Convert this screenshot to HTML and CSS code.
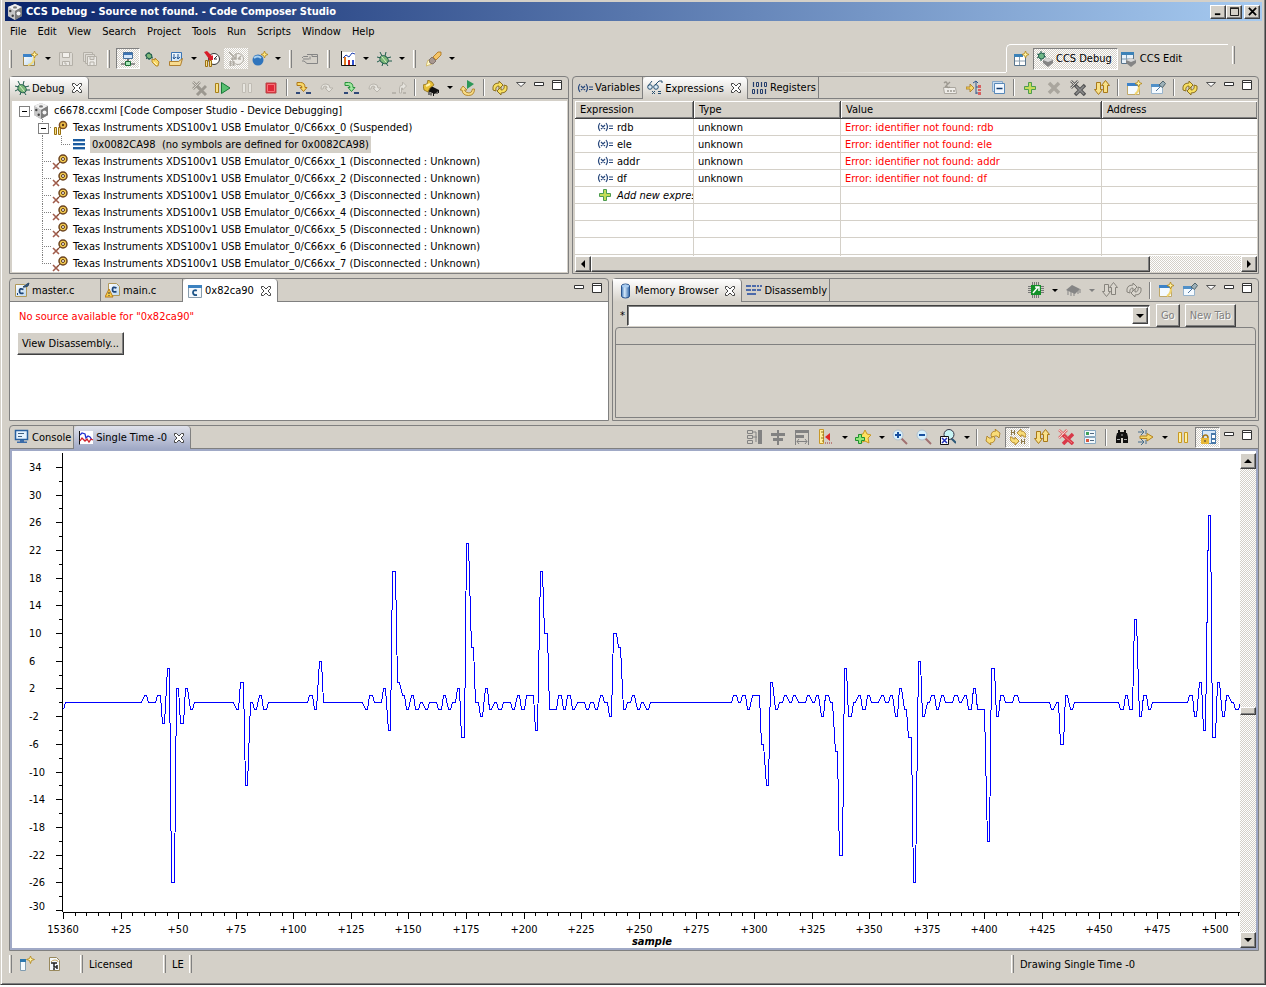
FILE: index.html
```html
<!DOCTYPE html>
<html lang="en">
<head>
    <meta charset="UTF-8">
    <meta name="viewport" content="width=device-width, initial-scale=1.0">
    <title>CCS Debug - Source not found. - Code Composer Studio</title>
    <link rel="stylesheet" href="styles.css">
</head>
<body>

<!-- icon set -->
<svg class="sprite" aria-hidden="true">
    <defs>
        <linearGradient id="gGold" x1="0" y1="0" x2="0" y2="1"><stop offset="0" stop-color="#fff0a8"/><stop offset="1" stop-color="#e0a830"/></linearGradient>
        <linearGradient id="gBlue" x1="0" y1="0" x2="1" y2="0"><stop offset="0" stop-color="#3f78b8"/><stop offset=".4" stop-color="#d4e8fa"/><stop offset="1" stop-color="#2f66a8"/></linearGradient>
        <linearGradient id="gPage" x1="0" y1="0" x2="1" y2="1"><stop offset="0" stop-color="#fff"/><stop offset="1" stop-color="#b8d6f0"/></linearGradient>
    </defs>
    <symbol id="cube" viewBox="0 0 16 16"><path d="M8 0l7 3v9l-7 4-7-4V3z" fill="#a0a0a0"/><path d="M8 0l7 3-7 4-7-4z" fill="#f0f0f0"/><path d="M1 3l7 4v9l-7-4z" fill="#c8c8c8"/><path d="M8 7l7-4v9l-7 4z" fill="#7c7c7c"/><ellipse cx="8" cy="3.400" rx="2" ry="1.200" fill="#777"/><circle cx="3.300" cy="7" r="1.200" fill="#444"/><circle cx="5.700" cy="11.700" r="1.200" fill="#444"/><circle cx="11.500" cy="9.500" r="2" fill="#f4f4f4"/></symbol>
    <symbol id="new" viewBox="0 0 16 16"><path d="M1.500 4.500h11v10h-11z" fill="url(#gPage)" stroke="#a08850"/><path d="M1 3h9v3H1z" fill="#3c82c8"/><path d="M6 14q6-1 6-8" fill="none" stroke="#f2dc80" stroke-width="2"/><path d="M12.500 0l1 2.500 2.500 1-2.500 1-1 2.500-1-2.500-2.500-1 2.500-1z" fill="#fff2a0" stroke="#b08418" stroke-width=".8"/></symbol>
    <symbol id="save" viewBox="0 0 16 16"><path d="M1.500 1.500h12l1 1v12h-13z" fill="#dedbd5" stroke="#b4b0a8"/><path d="M4.500 1.500h7v5h-7z" fill="#f2f0ec" stroke="#b4b0a8"/><path d="M4.500 10.500h7v4h-7zM6 12h2v2" fill="#eceae6" stroke="#b4b0a8"/></symbol>
    <symbol id="saveall" viewBox="0 0 16 16"><path d="M1.500 1.500h9v9h-9z" fill="#dedbd5" stroke="#b4b0a8"/><path d="M3.500 3.500h9v9h-9z" fill="#dedbd5" stroke="#b4b0a8"/><path d="M5.500 5.500h9v9h-9zM8 5.500v3h4v-3M8 14v-3h4v3" fill="#eceae6" stroke="#b4b0a8"/></symbol>
    <symbol id="target" viewBox="0 0 16 16"><path d="M3.500 1.500h9v6h-9z" fill="#d6e8fa" stroke="#46709c"/><path d="M4 2h8v2H4z" fill="#3c74b4"/><path d="M8 8v3" stroke="#777" stroke-width="2"/><path d="M1 13h14" stroke="#777" stroke-width="1.500"/><path d="M5.500 10.500h5v4h-5z" fill="#a8e8b8" stroke="#1c6c34"/></symbol>
    <symbol id="bug" viewBox="0 0 16 16"><path d="M4 1l2 4M10 1l-1 4M15 6l-4 1M16 10h-4M12 15l-2-3M6 15l1-3M1 11l4-2M1 6l4 1" stroke="#1f5c4c"/><ellipse cx="8.500" cy="8.500" rx="4.500" ry="3.600" transform="rotate(40 8 8)" fill="#7cb878" stroke="#1f5c4c"/><path d="M5.500 5.500l5 6" stroke="#dff2cc"/></symbol>
    <symbol id="bugplug" viewBox="0 0 16 16"><path d="M1 4l8 3M2 8l6-5M5 1v8" stroke="#1f5c4c"/><ellipse cx="5" cy="5" rx="3" ry="2.500" transform="rotate(40 5 5)" fill="#7cb878" stroke="#1f5c4c"/><path d="M8 8l3 1V7l4 4-1 4h-2l-4-4z" fill="#f8d868" stroke="#a87818" stroke-width=".8"/><path d="M10 11l3 3" stroke="#fff4c0"/></symbol>
    <symbol id="load" viewBox="0 0 16 16"><path d="M3.500 1.500h10v9h-10z" fill="url(#gPage)" stroke="#3c74b4"/><path d="M6 3v5M10 3v5M5 6l1 2 2-2M9 6l1 2 2-2" fill="none" stroke="#2c5c98"/><path d="M1.500 14.500v-4h9l4-3-2 7z" fill="#f8dc90" stroke="#b08030"/></symbol>
    <symbol id="clock" viewBox="0 0 16 16"><circle cx="10" cy="8" r="5.500" fill="#fff" stroke="#333"/><path d="M10 8l3-3M10 8h3" stroke="#333"/><path d="M0 1l3-1 5 5 1-1v5H4l1-1z" fill="#d81c28"/><path d="M1.500 9.500h2v6h-2zM5.500 9.500h2v6h-2z" fill="#f8e090" stroke="#9c7010"/></symbol>
    <symbol id="clockoff" viewBox="0 0 16 16"><circle cx="10" cy="8" r="5.500" fill="#f2f0ec" stroke="#b0aca4"/><path d="M10 8l3-3M10 8h3M1 1l7 7M8 3v5H3" stroke="#b0aca4" fill="none" stroke-width="1.500"/><path d="M2.500 10v5M5.500 10v5" stroke="#b0aca4" stroke-width="2"/></symbol>
    <symbol id="globe" viewBox="0 0 16 16"><circle cx="6" cy="9" r="5.500" fill="#2f74bc"/><path d="M2 7q4-3 7 0" stroke="#a8d0f0" stroke-width="2" fill="none"/><path d="M12.500 0l1 2.500 2.500 1-2.500 1-1 2.500-1-2.500-2.500-1 2.500-1z" fill="#ffe880" stroke="#b08418" stroke-width=".8"/></symbol>
    <symbol id="card" viewBox="0 0 16 16"><path d="M5 3.500h10.500v9H5l-3-2.500H0M6 5.500H1.500L0 7M7 8H1M8 5.500v3M10 3.500v2h5" fill="none" stroke="#858585"/></symbol>
    <symbol id="bars" viewBox="0 0 16 16"><path d="M2 1h13v13H2z" fill="#fff"/><path d="M1.500 0v14.500H16" fill="none" stroke="#111"/><path d="M3 7l3-3 3 2 3-4 3 1" fill="none" stroke="#2040b0"/><path d="M4 6h2v8H4z" fill="#e07820"/><path d="M8 9h2v5H8z" fill="#d02020"/><path d="M12 9h2v5h-2z" fill="#3050d0"/></symbol>
    <symbol id="torch" viewBox="0 0 16 16"><path d="M0 15l2-6 3 1 1 3z" fill="#fff8c8" stroke="#c8a840" stroke-width=".6"/><path d="M3 9l3-3 4 4-3 3q-4 0-4-4z" fill="#a89890" stroke="#6c5c54" stroke-width=".7"/><path d="M7 6l5-5h3v3l-5 5z" fill="#f4c468" stroke="#a87018" stroke-width=".8"/></symbol>
    <symbol id="xx" viewBox="0 0 16 16"><path d="M2 2l7 7M9 2L2 9" stroke="#9c9890" stroke-width="2.500"/><path d="M2 2l7 7M9 2L2 9" stroke="#d8d4cc"/><path d="M6 6l9 9M15 6l-9 9" stroke="#9c9890" stroke-width="3"/></symbol>
    <symbol id="xxdark" viewBox="0 0 16 16"><path d="M1 1l7 7M8 1L1 8" stroke="#666" stroke-width="2.500"/><path d="M1 1l7 7M8 1L1 8" stroke="#d8d4cc"/><path d="M5 5l10 10M15 5L5 15" stroke="#555" stroke-width="3.500"/><path d="M6 6l8 8M14 6l-8 8" stroke="#8c8c8c" stroke-width="1.500"/></symbol>
    <symbol id="xxred" viewBox="0 0 16 16"><path d="M1 1l8 7M9 1L1 9" stroke="#e07070" stroke-width="2.500"/><path d="M1 1l8 7M9 1L1 9" stroke="#f8d0d0"/><path d="M5 6l10 9M15 5L5 15" stroke="#d83848" stroke-width="3.500"/><path d="M6 7l8 7" stroke="#f07878"/></symbol>
    <symbol id="xone" viewBox="0 0 16 16"><path d="M3 3l10 10M13 3L3 13" stroke="#aaa69e" stroke-width="3.500"/></symbol>
    <symbol id="resume" viewBox="0 0 16 16"><path d="M.5 3.500h3v9h-3z" fill="#f8e088" stroke="#a88018"/><path d="M6.500 2.500l8.500 5.500-8.500 5.500z" fill="#58c070" stroke="#187838"/></symbol>
    <symbol id="pauseoff" viewBox="0 0 16 16"><path d="M3.500 3.500h3v9h-3zM9.500 3.500h3v9h-3z" fill="#e8e6e0" stroke="#c0bcb4"/></symbol>
    <symbol id="pause" viewBox="0 0 16 16"><path d="M3.500 3.500h3v10h-3zM9.500 3.500h3v10h-3z" fill="#fff0a0" stroke="#c89820"/></symbol>
    <symbol id="stop" viewBox="0 0 16 16"><path d="M3 3h10v10H3z" fill="#e02838" stroke="#b84848"/><path d="M4.500 4.500h7v7h-7z" fill="none" stroke="#f87078"/></symbol>
    <symbol id="into" viewBox="0 0 16 16"><path d="M2 2.500h3.500q4.500 0 4.500 5h2l-3.500 4-3.500-4h2q0-2-2-2H2z" fill="#f8d868" stroke="#b07818"/><path d="M1 13h4M11 13h5" stroke="#304878" stroke-width="2"/></symbol>
    <symbol id="intogreen" viewBox="0 0 16 16"><path d="M2 2.500h3.500q4.500 0 4.500 5h2l-3.500 4-3.500-4h2q0-2-2-2H2z" fill="#a0e8a0" stroke="#28903c"/><path d="M1 13h4M11 13h5" stroke="#304878" stroke-width="2"/></symbol>
    <symbol id="over" viewBox="0 0 16 16"><path d="M2 9q0-5 5-5 4 0 4 4h3l-4 4-4-4h2q0-2-2-2-2 0-2 3z" fill="#e6e4de" stroke="#b8b4ac"/></symbol>
    <symbol id="ret" viewBox="0 0 16 16"><path d="M8.500 13V8q0-3 3-3V2l4 4-4 4V8h-1v5z" fill="#e6e4de" stroke="#b8b4ac"/><path d="M1 13h4M12 13h3" stroke="#b8b4ac" stroke-width="2"/></symbol>
    <symbol id="chipgold" viewBox="0 0 16 16"><path d="M4 11l4-5 8 4-4 4z" fill="#111"/><path d="M6 12v3M8 13v2.500M10.500 13v3M14 11v3M15.500 10v3" stroke="#111"/><path d="M0 5l4-1 1-4 4 2 2 3-4 3-2 4-4-2z" fill="#e8c038" stroke="#8c6c18" stroke-width=".8"/><path d="M3 6l4-2" stroke="#fff4b0" stroke-width="2"/></symbol>
    <symbol id="restart" viewBox="0 0 16 16"><path d="M7 0l7 4-7 5z" fill="#2c9858"/><path d="M3 6l4 4H4.500q1 3 4.500 3 3 0 3.500-4h2q0 6.500-6 6.500Q2.500 15.500 2 10H0z" fill="#f8dc88" stroke="#a87818" stroke-width=".8"/></symbol>
    <symbol id="cycle" viewBox="0 0 16 16"><path d="M1 10q-1-7 6-7V1l4 4-4 4V6Q3 6 4 11z" fill="#f8e060" stroke="#8c7020"/><path d="M15 6q1 7-6 7v2l-4-4 4-4v3q4 0 3-5z" fill="#f8e060" stroke="#8c7020"/></symbol>
    <symbol id="cycleoff" viewBox="0 0 16 16"><path d="M1 10q-1-7 6-7V1l4 4-4 4V6Q3 6 4 11z" fill="#dad6ce" stroke="#86837c"/><path d="M15 6q1 7-6 7v2l-4-4 4-4v3q4 0 3-5z" fill="#dad6ce" stroke="#86837c"/></symbol>
    <symbol id="updown" viewBox="0 0 16 16"><path d="M2.500 2.500h4v7h2l-4 5-4-5h2z" fill="#f8e088" stroke="#a87818"/><path d="M9.500 12.500v-7h-2l4-5 4 5h-2v7z" fill="#f8e088" stroke="#a87818"/></symbol>
    <symbol id="updownoff" viewBox="0 0 16 16"><path d="M2.500 2.500h4v7h2l-4 5-4-5h2z" fill="#dad6ce" stroke="#86837c"/><path d="M9.500 12.500v-7h-2l4-5 4 5h-2v7z" fill="#dad6ce" stroke="#86837c"/></symbol>
    <symbol id="menu" viewBox="0 0 10 10"><path d="M.5 2.500h9L5 6.500z" fill="#fff" stroke="#555"/></symbol>
    <symbol id="min" viewBox="0 0 10 10"><path d="M.5 2.500h9v3h-9z" fill="#fff" stroke="#333"/></symbol>
    <symbol id="max" viewBox="0 0 10 10"><path d="M.5.5h9v9h-9zM0 2.500h10" fill="#fff" stroke="#333"/></symbol>
    <symbol id="close" viewBox="0 0 10 10"><path d="M.5.5h2L5 3 7.500.5h2v2L7 5l2.500 2.500v2h-2L5 7 2.500 9.500h-2v-2L3 5 .5 2.500z" fill="#fff" stroke="#444"/></symbol>
    <symbol id="vars" viewBox="0 0 16 16"><path d="M3 4q-3 4 0 8M9 4q3 4 0 8M4 6l4 4M8 6l-4 4M12 7h4M12 9.500h4" fill="none" stroke="#28487c" stroke-width="1.200"/></symbol>
    <symbol id="glasses" viewBox="0 0 16 16"><circle cx="3" cy="7" r="2.300" fill="#dcecf8" stroke="#285070"/><circle cx="9" cy="7" r="2.300" fill="#dcecf8" stroke="#285070"/><path d="M1 6l4-5M8 5l4-4 3 0v2M5 11l3 3M8 11l-3 3M11 11.500h3M11 13.500h3" fill="none" stroke="#285070"/></symbol>
    <symbol id="registers" viewBox="0 0 16 16"><path d="M1.500 2v5M9.500 2v5M5.500 9v5M13.500 9v5" stroke="#233c6c" stroke-width="1.200"/><path d="M4.500 2.500h2v4h-2zM12.500 2.500h2v4h-2zM.5 9.500h2v4h-2zM8.500 9.500h2v4h-2z" fill="none" stroke="#233c6c"/></symbol>
    <symbol id="typeoff" viewBox="0 0 16 16"><path d="M1.500 7.500h12l1 6h-12z" fill="#eeece8" stroke="#aaa69e"/><path d="M2 3q2-2 3 0v4q1 1 3 0M8 2L3 7M5 11h2M8 11h2M11 11h2" fill="none" stroke="#9c9890" stroke-width="1.300"/></symbol>
    <symbol id="logical" viewBox="0 0 16 16"><path d="M0 7h4V4l4 4-4 4V9H0z" fill="#f8d868" stroke="#a87818" stroke-width=".8"/><path d="M10 1v13M10 7h3M10 13h3M7 3l3-2 2 2" fill="none" stroke="#30588c"/><path d="M12 5h3v3h-3zM12 9h3v2h-3zM12 12h3v3h-3z" fill="#d86060"/></symbol>
    <symbol id="collapse" viewBox="0 0 16 16"><path d="M2.500 1.500h10v10h-10z" fill="#c8dcf0" stroke="#88a8c8"/><path d="M4.500 3.500h10v10h-10z" fill="#f2f8ff" stroke="#5888b8"/><path d="M6.500 8.500h6" stroke="#103c70" stroke-width="1.500"/></symbol>
    <symbol id="plus" viewBox="0 0 16 16"><path d="M6.500 2.500h3v4h4v3h-4v4h-3v-4h-4v-3h4z" fill="#c4dc58" stroke="#4c9c50"/></symbol>
    <symbol id="newview" viewBox="0 0 16 16"><path d="M1.500 3.500h12v11h-12z" fill="#f4faff" stroke="#c0a868"/><path d="M1 3h11v3H1z" fill="#3c82c8"/><path d="M9 14q4-2 4-8" fill="none" stroke="#f0d470" stroke-width="2"/><path d="M12.500 0l1 2.500 2.500 1-2.500 1-1 2.500-1-2.500-2.500-1 2.500-1z" fill="#fff2a0" stroke="#b08418" stroke-width=".8"/></symbol>
    <symbol id="pin" viewBox="0 0 16 16"><path d="M1.500 4.500h11v9h-11z" fill="#f4faff" stroke="#98b4cc"/><path d="M1 4h10v3H1z" fill="#5090c8"/><path d="M6 11l4-4" stroke="#50749c"/><path d="M9 5l4-4 2.500 2.500-3 4z" fill="#9cb0b8" stroke="#50646c"/></symbol>
    <symbol id="memory" viewBox="0 0 16 16"><path d="M4.500 3q0-2 4-2t4 2v10q0 2-4 2t-4-2z" fill="url(#gBlue)" stroke="#28528c"/><ellipse cx="8.500" cy="3" rx="3.500" ry="1.500" fill="#a8ccf0"/></symbol>
    <symbol id="disasm" viewBox="0 0 16 16"><path d="M0 4h5M6 4h4M11 4h2M14 4h2M0 8h5M6 8h4M11 8h4M1 12h9" stroke="#1f48a0" stroke-width="1.600"/></symbol>
    <symbol id="chipgreen" viewBox="0 0 16 16"><path d="M4.500 0v16M6.500 0v16M8.500 0v16M10.500 0v16M0 4.500h16M0 6.500h16M0 8.500h16M0 10.500h16" stroke="#777"/><path d="M3 3h10v10H3z" fill="#149028"/><path d="M5 11l5-6M7 5h4v4" fill="none" stroke="#fff" stroke-width="1.500"/></symbol>
    <symbol id="chipoff" viewBox="0 0 16 16"><path d="M1 8l6-5 8 4-5 5z" fill="#858585"/><path d="M3 8v5M6 9v5M9 10v4M13 8v4M15 7v4" stroke="#858585"/></symbol>
    <symbol id="cfile" viewBox="0 0 16 16"><path d="M1.500 2.500h9l2 2v10h-11z" fill="url(#gPage)" stroke="#b09858"/><path d="M9.500 7.500q-4-2-4 1.500t4 2M3 12h1" fill="none" stroke="#1c4478" stroke-width="1.800"/><path d="M9 5l4-3 2-1-1 3-3 1z" fill="#385878" stroke="#284868"/></symbol>
    <symbol id="cwarn" viewBox="0 0 16 16"><path d="M3.500 1.500h8l3 3v9h-11z" fill="url(#gPage)" stroke="#b09858"/><path d="M11.500 6q-4-2-4 1.500t4 2" fill="none" stroke="#1c4478" stroke-width="1.800"/><path d="M4 7l4 8H0z" fill="#f8d048" stroke="#b87818"/><path d="M4 10v2M4 13v1" stroke="#333"/></symbol>
    <symbol id="cview" viewBox="0 0 16 16"><path d="M1.500 2.500h13v12h-13z" fill="#f4f8fc" stroke="#889cac"/><path d="M1 2h14v3H1z" fill="#3c82c0"/><path d="M10 7.500q-4-1-4 2t4 2.500" fill="none" stroke="#1c5488" stroke-width="1.800"/></symbol>
    <symbol id="console" viewBox="0 0 16 16"><path d="M1.500 1.500h12v9h-12z" fill="#e4f2ff" stroke="#2860a0" stroke-width="1.500"/><path d="M4 4.500h6M4 7.500h4" stroke="#406080"/><path d="M6 11h4v1.500h3V14H3v-1.500h3z" fill="#3c6ca8"/></symbol>
    <symbol id="graph" viewBox="0 0 16 16"><path d="M1 1h14v13H1z" fill="#fff"/><path d="M1.500 1v13.500" stroke="#111"/><path d="M2 5l2-2 3 1 1 4 2-2 2 1 2 3" fill="none" stroke="#2030d0" stroke-width="1.300"/><path d="M2 11l2-3 3 3 2-2 2 3 2-3 2 1" fill="none" stroke="#d02028" stroke-width="1.300"/></symbol>
    <symbol id="align1" viewBox="0 0 16 16"><path d="M1.500 1.500h5v3h-5zM1.500 6.500h5v3h-5zM1.500 11.500h5v3h-5zM7 3h3v10M7 8h4" fill="none" stroke="#828282"/><path d="M12 1h4v14h-4z" fill="#828282"/></symbol>
    <symbol id="align2" viewBox="0 0 16 16"><path d="M1 4h14v3H1zM3 9h10v3H3zM7 1h2v15H7z" fill="#828282"/></symbol>
    <symbol id="align3" viewBox="0 0 16 16"><path d="M1 1h14v3H1zM2 6h8v3H2z" fill="#828282"/><path d="M1.500 4v12M14.500 4v12M3 12.500h10M5 10l-2 2.500L5 15M11 10l2 2.500-2 2.500" fill="none" stroke="#828282"/></symbol>
    <symbol id="ruler" viewBox="0 0 16 16"><path d="M1.500.5h4v14h-4z" fill="#fff0a0" stroke="#c89828"/><path d="M3 3h3M4 6h2M3 9h3M4 12h2" stroke="#94701c"/><path d="M12 4v8L7 8z" fill="#e02828"/><path d="M7 14h8" stroke="#a03030" stroke-dasharray="1 1"/></symbol>
    <symbol id="staradd" viewBox="0 0 16 16"><path d="M10 1l2 4 4 1-3 3 1 5-4-2-5 2 1-5-3-3 5-1z" fill="#ffe060" stroke="#c89820"/><path d="M3.500 5.500h3v3h3v3h-3v3h-3v-3h-3v-3h3z" fill="#90e878" stroke="#209030"/></symbol>
    <symbol id="zoomin" viewBox="0 0 16 16"><path d="M9 9l6 6" stroke="#a07070" stroke-width="2"/><circle cx="6" cy="6" r="5" fill="#d8f0fc" stroke="#b0c0cc"/><path d="M3 6h6M6 3v6" stroke="#1850a0" stroke-width="2"/></symbol>
    <symbol id="zoomout" viewBox="0 0 16 16"><path d="M9 9l6 6" stroke="#a07070" stroke-width="2"/><circle cx="6" cy="6" r="5" fill="#d8f0fc" stroke="#b0c0cc"/><path d="M3 6h6" stroke="#1850a0" stroke-width="2"/></symbol>
    <symbol id="zoomreset" viewBox="0 0 16 16"><path d="M11 9l5 5" stroke="#2c5878" stroke-width="2"/><circle cx="9" cy="5.500" r="5" fill="#c8f4f4" stroke="#334"/><path d="M.5 7.500h8v8h-8z" fill="#fff" stroke="#111"/><path d="M2 9l5 5M7 9l-5 5" stroke="#2030b8" stroke-width="1.500"/></symbol>
    <symbol id="refresh" viewBox="0 0 16 16"><path d="M6 7q0-5 5-5l-1-2 5 4-1 5-2-2q-3-1-4 2z" fill="#f8dc78" stroke="#a87818" stroke-width=".8"/><path d="M10 9q0 5-5 5l1 2-5-4 1-5 2 2q3 1 4-2z" fill="#f8dc78" stroke="#a87818" stroke-width=".8"/></symbol>
    <symbol id="halt" viewBox="0 0 16 16"><path d="M1.500 1v5M4.500 1v5M1.500 3.500h3M11.500 10v5M14.500 10v5M11.500 12.500h3" stroke="#8c7848"/><path d="M7 4l4-4v2q5 0 5 6l-2 0q0-2-3-2v2z" fill="#f8dc78" stroke="#a87818" stroke-width=".8"/><path d="M9 12l-4 4v-2q-5 0-5-6l2 0q0 2 3 2V8z" fill="#f8dc78" stroke="#a87818" stroke-width=".8"/></symbol>
    <symbol id="props" viewBox="0 0 16 16"><path d="M2.500 1.500h11v6h-11zM2.500 8.500h11v6h-11z" fill="#f2f8fc" stroke="#88a8c0"/><path d="M4 3h3v3H4z" fill="#40a058"/><path d="M4 10h3v3H4z" fill="#d85840"/><path d="M8 4.500h4M8 11.500h4" stroke="#506880"/></symbol>
    <symbol id="find" viewBox="0 0 16 16"><path d="M4 1h2v2h4V1h2v3h1l1 4v6H9V9H7v5H2V8l1-4h1z" fill="#111"/><path d="M3 10.500h3M10 10.500h3M7 6h2" stroke="#aaa"/></symbol>
    <symbol id="stepfast" viewBox="0 0 16 16"><path d="M0 3h6M3 0l3 3-3 3M0 13h6M3 10l3 3-3 3M8 1v4M8 11v4" fill="none" stroke="#446c8c"/><path d="M2 7h7V4.500L15 8l-6 4V9.500H2z" fill="#f8d868" stroke="#b08020"/></symbol>
    <symbol id="lock" viewBox="0 0 16 16"><path d="M2.500 1.500h13v13h-13z" fill="#d8e8f8" stroke="#5888b8"/><path d="M11 4h5v11h-5z" fill="#4878a8"/><path d="M12 6h3v3h-3zM12 11h3v2h-3z" fill="#fff"/><path d="M3 9q0-3 2.500-3T8 9" fill="none" stroke="#a87818" stroke-width="1.500"/><path d="M1 9h8v6H1z" fill="#e8b838"/><path d="M4.500 11h1v2h-1z" fill="#333"/></symbol>
    <symbol id="persp" viewBox="0 0 16 16"><path d="M1.500 3.500h11v11h-11z" fill="#fff" stroke="#58748c"/><path d="M1 3h9v3H1z" fill="#3c82b8"/><path d="M6.500 6v8M2 10h10" stroke="#8ca0b0"/><path d="M12.500 0l1 2.500 2.500 1-2.500 1-1 2.500-1-2.500-2.500-1 2.500-1z" fill="#fff2a0" stroke="#b08418" stroke-width=".8"/></symbol>
    <symbol id="perspdebug" viewBox="0 0 16 16"><path d="M0 3l9 3M0 7l8-5M4 0v10" stroke="#1f5c4c"/><circle cx="4.500" cy="5" r="3" fill="#70b888" stroke="#1f5c4c"/><path d="M6 9l5-2 5 2v3l-5 4-5-4z" fill="#858585"/><path d="M6 9l5-2 5 2-5 2z" fill="#d8d8d8"/></symbol>
    <symbol id="perspedit" viewBox="0 0 16 16"><path d="M.5 1.500h12v11H.5z" fill="#e8f2fa" stroke="#58748c"/><path d="M0 1h13v3H0z" fill="#3c82b8"/><path d="M5.500 4v8M1 8h11" stroke="#7898b0"/><path d="M5 9l5-2 5 2v3l-5 4-5-4z" fill="#858585"/><path d="M5 9l5-2 5 2-5 2z" fill="#d8d8d8"/></symbol>
    <symbol id="thread" viewBox="0 0 16 16"><path d="M2.500 7.500h2v7h-2zM6.500 7.500h2v7h-2z" fill="#f8e088" stroke="#987010"/><circle cx="11" cy="5" r="3.600" fill="#f0c048" stroke="#7c4c20" stroke-width="1.500"/><circle cx="11" cy="5" r="1.200" fill="#5c3818"/></symbol>
    <symbol id="unlinked" viewBox="0 0 16 16"><path d="M1 9l6 6M7 9l-6 6" stroke="#a05c4c" stroke-width="1.600"/><path d="M5 11l4-4" stroke="#7c4c30"/><circle cx="11" cy="5" r="4" fill="#f4cc50" stroke="#6c4420" stroke-width="1.500"/><circle cx="11" cy="5" r="1.500" fill="#fff" stroke="#5c3818"/></symbol>
    <symbol id="frame" viewBox="0 0 16 16"><path d="M2 3h12M2 7h12M2 11h12" stroke="#1c5ca0" stroke-width="2"/><path d="M2 4.500h12M2 8.500h12M2 12.500h12" stroke="#a4c4e0"/></symbol>
    <symbol id="fastview" viewBox="0 0 16 16"><path d="M1.500 3.500h5v11h-5z" fill="#f4faff" stroke="#809cb0"/><path d="M1 3h6v3H1z" fill="#2c78b0"/><path d="M11.500 0l1 2.500 3 1-3 1-1 3-1-3-3-1 3-1z" fill="#fff2a0" stroke="#b08418" stroke-width=".8"/></symbol>
    <symbol id="tip" viewBox="0 0 16 16"><path d="M2.500 1.500h7l3 3v10h-10z" fill="#f4f8fc" stroke="#98885c"/><path d="M4 6q1-2 4-2t3 2" fill="none" stroke="#c8a860"/><path d="M4 7h6M7 7v4h3M10 9v4M6 13h2" fill="none" stroke="#222" stroke-width="1.500"/></symbol>
</svg>

<div class="window">
    <header class="titlebar">
        <svg class="icon"><use href="#cube"/></svg>
        <h1 class="title">CCS Debug - Source not found. - Code Composer Studio</h1>
        <div class="window-buttons">
            <button class="winbtn" aria-label="Minimize"><svg viewBox="0 0 10 10"><path d="M1 8h6" stroke="#000" stroke-width="2"/></svg></button>
            <button class="winbtn" aria-label="Maximize"><svg viewBox="0 0 10 10"><path d="M.5 1.500h9v8h-9zM0 1h10" fill="none" stroke="#000"/></svg></button>
            <button class="winbtn close" aria-label="Close"><svg viewBox="0 0 10 10"><path d="M1 1l8 8M9 1L1 9" stroke="#000" stroke-width="2"/></svg></button>
        </div>
    </header>

    <nav class="menubar">
        <button>File</button><button>Edit</button><button>View</button><button>Search</button><button>Project</button><button>Tools</button><button>Run</button><button>Scripts</button><button>Window</button><button>Help</button>
    </nav>

    <div class="toolbar">
        <div class="tools main-tools">
            <span class="grip"></span>
            <button class="tool" aria-label="New"><svg class="icon"><use href="#new"/></svg></button><button class="caret" aria-label="New menu"></button>
            <button class="tool" aria-label="Save"><svg class="icon"><use href="#save"/></svg></button>
            <button class="tool" aria-label="Save all"><svg class="icon"><use href="#saveall"/></svg></button>
            <span class="grip"></span>
            <button class="tool pressed" aria-label="Connect target"><svg class="icon"><use href="#target"/></svg></button>
            <button class="tool" aria-label="Debug active project"><svg class="icon"><use href="#bugplug"/></svg></button>
            <button class="tool" aria-label="Load program"><svg class="icon"><use href="#load"/></svg></button><button class="caret" aria-label="Load menu"></button>
            <button class="tool" aria-label="Profile clock"><svg class="icon"><use href="#clock"/></svg></button>
            <button class="tool dither" aria-label="Clock disabled"><svg class="icon"><use href="#clockoff"/></svg></button>
            <button class="tool" aria-label="New target"><svg class="icon"><use href="#globe"/></svg></button><button class="caret" aria-label="Target menu"></button>
            <span class="grip"></span>
            <button class="tool" aria-label="Build"><svg class="icon"><use href="#card"/></svg></button>
            <span class="grip"></span>
            <button class="tool" aria-label="Graphs"><svg class="icon"><use href="#bars"/></svg></button><button class="caret" aria-label="Graph menu"></button>
            <button class="tool" aria-label="Debug"><svg class="icon"><use href="#bug"/></svg></button><button class="caret" aria-label="Debug menu"></button>
            <span class="grip"></span>
            <button class="tool" aria-label="Search"><svg class="icon"><use href="#torch"/></svg></button><button class="caret" aria-label="Search menu"></button>
        </div>
        <div class="curve-tail"></div>
        <div class="perspectives">
            <button class="tool" aria-label="Open perspective"><svg class="icon"><use href="#persp"/></svg></button>
            <button class="persp active"><svg class="icon"><use href="#perspdebug"/></svg>CCS Debug</button>
            <button class="persp"><svg class="icon"><use href="#perspedit"/></svg>CCS Edit</button>
        </div>
        <span class="grip end"></span>
    </div>

    <main class="workbench">
        <div class="row row-top">
            <section class="panel">
                <div class="tabs">
                    <button class="tab selected"><svg class="icon"><use href="#bug"/></svg>Debug<svg class="x"><use href="#close"/></svg></button>
                    <div class="tools">
                        <button class="tool" aria-label="Remove all terminated"><svg class="icon"><use href="#xx"/></svg></button>
                        <button class="tool" aria-label="Resume"><svg class="icon"><use href="#resume"/></svg></button>
                        <button class="tool" aria-label="Suspend"><svg class="icon"><use href="#pauseoff"/></svg></button>
                        <button class="tool" aria-label="Terminate"><svg class="icon"><use href="#stop"/></svg></button>
                        <span class="sep"></span>
                        <button class="tool" aria-label="Step into"><svg class="icon"><use href="#into"/></svg></button>
                        <button class="tool" aria-label="Step over"><svg class="icon"><use href="#over"/></svg></button>
                        <button class="tool" aria-label="Assembly step into"><svg class="icon"><use href="#intogreen"/></svg></button>
                        <button class="tool" aria-label="Assembly step over"><svg class="icon"><use href="#over"/></svg></button>
                        <button class="tool" aria-label="Step return"><svg class="icon"><use href="#ret"/></svg></button>
                        <span class="sep"></span>
                        <button class="tool" aria-label="Reset CPU"><svg class="icon"><use href="#chipgold"/></svg></button><button class="caret" aria-label="Reset menu"></button>
                        <button class="tool" aria-label="Restart"><svg class="icon"><use href="#restart"/></svg></button>
                        <span class="sep"></span>
                        <button class="tool" aria-label="Refresh"><svg class="icon"><use href="#cycle"/></svg></button>
                        <button class="viewbtn" aria-label="View menu"><svg><use href="#menu"/></svg></button><button class="viewbtn" aria-label="Minimize"><svg><use href="#min"/></svg></button><button class="viewbtn" aria-label="Maximize"><svg><use href="#max"/></svg></button>
                    </div>
                </div>
                <div class="panel-body">
                    <ul class="tree">
                        <li><span class="guide box first"></span><svg class="icon"><use href="#cube"/></svg><span class="label">c6678.ccxml [Code Composer Studio - Device Debugging]</span></li>
                        <li><span class="guide"></span><span class="guide line box"></span><svg class="icon"><use href="#thread"/></svg><span class="label">Texas Instruments XDS100v1 USB Emulator_0/C66xx_0 (Suspended)</span></li>
                        <li><span class="guide"></span><span class="guide line"></span><span class="guide elbow"></span><svg class="icon"><use href="#frame"/></svg><span class="label current">0x0082CA98&nbsp; (no symbols are defined for 0x0082CA98)</span></li>
                        <li><span class="guide"></span><span class="guide line arm"></span><svg class="icon"><use href="#unlinked"/></svg><span class="label">Texas Instruments XDS100v1 USB Emulator_0/C66xx_1 (Disconnected : Unknown)</span></li>
                        <li><span class="guide"></span><span class="guide line arm"></span><svg class="icon"><use href="#unlinked"/></svg><span class="label">Texas Instruments XDS100v1 USB Emulator_0/C66xx_2 (Disconnected : Unknown)</span></li>
                        <li><span class="guide"></span><span class="guide line arm"></span><svg class="icon"><use href="#unlinked"/></svg><span class="label">Texas Instruments XDS100v1 USB Emulator_0/C66xx_3 (Disconnected : Unknown)</span></li>
                        <li><span class="guide"></span><span class="guide line arm"></span><svg class="icon"><use href="#unlinked"/></svg><span class="label">Texas Instruments XDS100v1 USB Emulator_0/C66xx_4 (Disconnected : Unknown)</span></li>
                        <li><span class="guide"></span><span class="guide line arm"></span><svg class="icon"><use href="#unlinked"/></svg><span class="label">Texas Instruments XDS100v1 USB Emulator_0/C66xx_5 (Disconnected : Unknown)</span></li>
                        <li><span class="guide"></span><span class="guide line arm"></span><svg class="icon"><use href="#unlinked"/></svg><span class="label">Texas Instruments XDS100v1 USB Emulator_0/C66xx_6 (Disconnected : Unknown)</span></li>
                        <li><span class="guide"></span><span class="guide elbow"></span><svg class="icon"><use href="#unlinked"/></svg><span class="label">Texas Instruments XDS100v1 USB Emulator_0/C66xx_7 (Disconnected : Unknown)</span></li>
                    </ul>
                </div>
            </section>

            <section class="panel">
                <div class="tabs">
                    <button class="tab"><svg class="icon"><use href="#vars"/></svg>Variables</button>
                    <button class="tab selected"><svg class="icon"><use href="#glasses"/></svg>Expressions<svg class="x"><use href="#close"/></svg></button>
                    <button class="tab"><svg class="icon"><use href="#registers"/></svg>Registers</button>
                    <div class="tools">
                        <button class="tool" aria-label="Show type names"><svg class="icon"><use href="#typeoff"/></svg></button>
                        <button class="tool" aria-label="Show logical structure"><svg class="icon"><use href="#logical"/></svg></button>
                        <button class="tool" aria-label="Collapse all"><svg class="icon"><use href="#collapse"/></svg></button>
                        <span class="sep"></span>
                        <button class="tool" aria-label="Add expression"><svg class="icon"><use href="#plus"/></svg></button>
                        <button class="tool" aria-label="Remove"><svg class="icon"><use href="#xone"/></svg></button>
                        <button class="tool" aria-label="Remove all"><svg class="icon"><use href="#xxdark"/></svg></button>
                        <button class="tool" aria-label="Continuous refresh"><svg class="icon"><use href="#updown"/></svg></button>
                        <span class="sep"></span>
                        <button class="tool" aria-label="New view"><svg class="icon"><use href="#newview"/></svg></button>
                        <button class="tool" aria-label="Pin view"><svg class="icon"><use href="#pin"/></svg></button>
                        <span class="sep"></span>
                        <button class="tool" aria-label="Refresh"><svg class="icon"><use href="#cycle"/></svg></button>
                        <button class="viewbtn" aria-label="View menu"><svg><use href="#menu"/></svg></button><button class="viewbtn" aria-label="Minimize"><svg><use href="#min"/></svg></button><button class="viewbtn" aria-label="Maximize"><svg><use href="#max"/></svg></button>
                    </div>
                </div>
                <div class="panel-body expressions">
                    <div class="table-wrap">
                        <table>
                            <colgroup><col class="c-expr"><col class="c-type"><col class="c-value"><col></colgroup>
                            <thead><tr><th>Expression</th><th>Type</th><th>Value</th><th>Address</th></tr></thead>
                            <tbody>
                                <tr><td><div class="expr"><svg class="icon"><use href="#vars"/></svg>rdb</div></td><td>unknown</td><td class="error">Error: identifier not found: rdb</td><td></td></tr>
                                <tr><td><div class="expr"><svg class="icon"><use href="#vars"/></svg>ele</div></td><td>unknown</td><td class="error">Error: identifier not found: ele</td><td></td></tr>
                                <tr><td><div class="expr"><svg class="icon"><use href="#vars"/></svg>addr</div></td><td>unknown</td><td class="error">Error: identifier not found: addr</td><td></td></tr>
                                <tr><td><div class="expr"><svg class="icon"><use href="#vars"/></svg>df</div></td><td>unknown</td><td class="error">Error: identifier not found: df</td><td></td></tr>
                                <tr><td><div class="expr add"><svg class="icon"><use href="#plus"/></svg>Add new expression</div></td><td></td><td></td><td></td></tr>
                                <tr><td></td><td></td><td></td><td></td></tr>
                                <tr><td></td><td></td><td></td><td></td></tr>
                                <tr><td></td><td></td><td></td><td></td></tr>
                                <tr><td></td><td></td><td></td><td></td></tr>
                            </tbody>
                        </table>
                    </div>
                    <div class="scroll horizontal">
                        <button class="raised" aria-label="Scroll left"><span class="arrow left"></span></button>
                        <div class="thumb raised"></div>
                        <div class="track"></div>
                        <button class="raised" aria-label="Scroll right"><span class="arrow right"></span></button>
                    </div>
                </div>
            </section>
        </div>

        <div class="row row-middle">
            <section class="panel">
                <div class="tabs">
                    <button class="tab file"><svg class="icon"><use href="#cfile"/></svg>master.c</button>
                    <button class="tab file main-c"><svg class="icon"><use href="#cwarn"/></svg>main.c</button>
                    <button class="tab selected plain"><svg class="icon"><use href="#cview"/></svg>0x82ca90<svg class="x"><use href="#close"/></svg></button>
                    <div class="tools">
                        <button class="viewbtn" aria-label="Minimize"><svg><use href="#min"/></svg></button><button class="viewbtn" aria-label="Maximize"><svg><use href="#max"/></svg></button>
                    </div>
                </div>
                <div class="panel-body source">
                    <p class="error">No source available for "0x82ca90"</p>
                    <button class="push">View Disassembly...</button>
                </div>
            </section>

            <section class="panel">
                <div class="tabs">
                    <button class="tab selected"><svg class="icon"><use href="#memory"/></svg>Memory Browser<svg class="x"><use href="#close"/></svg></button>
                    <button class="tab"><svg class="icon"><use href="#disasm"/></svg>Disassembly</button>
                    <div class="tools">
                        <button class="tool" aria-label="Go to address"><svg class="icon"><use href="#chipgreen"/></svg></button><button class="caret" aria-label="Address menu"></button>
                        <button class="tool" aria-label="Save memory"><svg class="icon"><use href="#chipoff"/></svg></button><button class="caret off" aria-label="Memory menu"></button>
                        <button class="tool" aria-label="Continuous refresh"><svg class="icon"><use href="#updownoff"/></svg></button>
                        <button class="tool" aria-label="Refresh"><svg class="icon"><use href="#cycleoff"/></svg></button>
                        <span class="sep"></span>
                        <button class="tool" aria-label="New view"><svg class="icon"><use href="#newview"/></svg></button>
                        <button class="tool" aria-label="Pin view"><svg class="icon"><use href="#pin"/></svg></button>
                        <button class="viewbtn" aria-label="View menu"><svg><use href="#menu"/></svg></button><button class="viewbtn" aria-label="Minimize"><svg><use href="#min"/></svg></button><button class="viewbtn" aria-label="Maximize"><svg><use href="#max"/></svg></button>
                    </div>
                </div>
                <div class="memory">
                    <div class="address-bar">
                        <label for="address">*</label>
                        <div class="combo"><input type="text" id="address"><button class="raised" aria-label="Address history"><span class="arrow down"></span></button></div>
                        <button class="push" disabled>Go</button>
                        <button class="push" disabled>New Tab</button>
                    </div>
                    <div class="memory-view"><div class="memory-tabs"></div></div>
                </div>
            </section>
        </div>

        <section class="panel graph">
            <div class="tabs">
                <button class="tab"><svg class="icon"><use href="#console"/></svg>Console</button>
                <button class="tab selected focus"><svg class="icon"><use href="#graph"/></svg>Single Time -0<svg class="x"><use href="#close"/></svg></button>
                <div class="tools">
                    <button class="tool" aria-label="Align left"><svg class="icon"><use href="#align1"/></svg></button>
                    <button class="tool" aria-label="Align center"><svg class="icon"><use href="#align2"/></svg></button>
                    <button class="tool" aria-label="Align width"><svg class="icon"><use href="#align3"/></svg></button>
                    <button class="tool" aria-label="Measurement marker"><svg class="icon"><use href="#ruler"/></svg></button><button class="caret" aria-label="Marker menu"></button>
                    <button class="tool" aria-label="Add bookmark"><svg class="icon"><use href="#staradd"/></svg></button><button class="caret" aria-label="Bookmark menu"></button>
                    <button class="tool" aria-label="Zoom in"><svg class="icon"><use href="#zoomin"/></svg></button>
                    <button class="tool" aria-label="Zoom out"><svg class="icon"><use href="#zoomout"/></svg></button>
                    <button class="tool" aria-label="Reset zoom"><svg class="icon"><use href="#zoomreset"/></svg></button><button class="caret" aria-label="Zoom menu"></button>
                    <span class="sep"></span>
                    <button class="tool" aria-label="Refresh"><svg class="icon"><use href="#refresh"/></svg></button>
                    <button class="tool pressed" aria-label="Refresh on halt"><svg class="icon"><use href="#halt"/></svg></button>
                    <button class="tool" aria-label="Continuous refresh"><svg class="icon"><use href="#updown"/></svg></button>
                    <button class="tool" aria-label="Clear"><svg class="icon"><use href="#xxred"/></svg></button>
                    <button class="tool" aria-label="Properties"><svg class="icon"><use href="#props"/></svg></button>
                    <span class="sep"></span>
                    <button class="tool" aria-label="Find"><svg class="icon"><use href="#find"/></svg></button>
                    <button class="tool" aria-label="Step"><svg class="icon"><use href="#stepfast"/></svg></button><button class="caret" aria-label="Step menu"></button>
                    <button class="tool" aria-label="Pause"><svg class="icon"><use href="#pause"/></svg></button>
                    <button class="tool pressed" aria-label="Scroll lock"><svg class="icon"><use href="#lock"/></svg></button>
                    <button class="viewbtn" aria-label="Minimize"><svg><use href="#min"/></svg></button><button class="viewbtn" aria-label="Maximize"><svg><use href="#max"/></svg></button>
                </div>
            </div>
            <div class="graph-body">
                <div class="plot"><svg id="chart" role="img" aria-label="Single Time graph"></svg></div>
                <div class="scroll vertical">
                    <button class="raised" aria-label="Scroll up"><span class="arrow up"></span></button>
                    <div class="track above"></div>
                    <div class="thumb raised"></div>
                    <div class="track"></div>
                    <button class="raised" aria-label="Scroll down"><span class="arrow down"></span></button>
                </div>
            </div>
        </section>
    </main>

    <footer class="statusbar">
        <span class="bar"></span>
        <div class="status-icons"><svg class="icon"><use href="#fastview"/></svg><svg class="icon"><use href="#tip"/></svg></div>
        <span class="bar"></span>
        <span class="status licensed">Licensed</span>
        <span class="bar"></span>
        <span class="status">LE</span>
        <span class="bar"></span>
        <div class="progress"><span class="bar"></span><span class="status">Drawing Single Time -0</span></div>
    </footer>
</div>

<script src="script.js"></script>
</body>
</html>
```
FILE: styles.css
```css
* {
    box-sizing: border-box;
}
body {
    margin: 0;
    background: #fff;
    color: #000;
    font: 11px/13px "DejaVu Sans Condensed", Tahoma, sans-serif;
}
button, input {
    font: inherit;
    color: inherit;
    margin: 0;
    padding: 0;
    border: 0;
    background: none;
    border-radius: 0;
}
h1, p, ul {
    margin: 0;
    padding: 0;
}
svg {
    display: block;
    flex: none;
}
.sprite {
    position: absolute;
    width: 0;
    height: 0;
}
.icon {
    width: 16px;
    height: 16px;
}
.error {
    color: #f00;
}

/* window */
.window {
    display: flex;
    flex-direction: column;
    height: calc(100vh - 2px);
    min-height: 700px;
    padding: 2px 3px 0 3px;
    background: #d4d0c8;
    border-left: 1px solid #d4d0c8;
    border-right: 1px solid #404040;
    border-bottom: 1px solid #404040;
    box-shadow: inset 1px 0 #fff, inset -1px -1px #808080;
}
.titlebar {
    display: flex;
    align-items: center;
    height: 19px;
    margin-left: 1px;
    padding: 0 2px;
    background: linear-gradient(90deg, #0a246a, #a6caf0);
}
.title {
    flex: 1;
    margin-left: 3px;
    font-size: 11px;
    color: #fff;
}
.window-buttons {
    display: flex;
}
.winbtn {
    display: flex;
    align-items: center;
    justify-content: center;
    width: 16px;
    height: 14px;
    background: #d4d0c8;
    border: 1px solid;
    border-color: #fff #404040 #404040 #fff;
    box-shadow: inset -1px -1px #808080;
}
.winbtn.close {
    margin-left: 2px;
}
.winbtn svg {
    width: 9px;
    height: 9px;
}
.menubar {
    display: flex;
    gap: 11px;
    height: 20px;
    padding-left: 6px;
}
.toolbar {
    display: flex;
    height: 35px;
    padding-right: 27px;
}
.tools {
    display: flex;
    align-items: center;
}
.main-tools {
    flex: 1;
}
.tool {
    display: flex;
    align-items: center;
    justify-content: center;
    width: 24px;
    height: 21px;
}
.pressed, .dither, .persp.active, .track {
    background: repeating-conic-gradient(#fff 0 25%, #d4d0c8 0 50%) 0 0 / 2px 2px;
}
.pressed, .persp.active {
    border: 1px solid;
    border-color: #808080 #fff #fff #808080;
}
.graph .pressed {
    width: 25px;
}
.caret {
    width: 12px;
    height: 16px;
    display: flex;
    align-items: center;
    justify-content: center;
}
.tabs .caret {
    width: 13px;
}
.caret::after {
    content: "";
    border: 3px solid transparent;
    border-top-color: #000;
    border-bottom: 0;
}
.caret.off::after {
    border-top-color: #808080;
}
.grip, .bar {
    flex: none;
    width: 3px;
    height: 18px;
    margin: 0 6px 0 5px;
    border-left: 1px solid #fff;
    border-right: 1px solid #808080;
}
.sep {
    width: 2px;
    height: 17px;
    margin: 0 3px;
    border-left: 1px solid #808080;
    border-right: 1px solid #fff;
}
.curve-tail {
    width: 190px;
    height: 32px;
    background: linear-gradient(90deg, #d4d0c8, #fff) bottom / 100% 1px no-repeat;
}
.perspectives {
    display: flex;
    align-items: center;
    width: 222px;
    height: 28px;
    margin-top: 3px;
    padding-left: 2px;
    border-left: 1px solid #fff;
    border-top: 1px solid #fff;
    border-top-left-radius: 5px;
}
.persp {
    display: flex;
    align-items: center;
    gap: 3px;
    height: 22px;
    padding: 0 5px 0 3px;
}
.grip.end {
    margin: 5px 0 0 4px;
}

/* panels */
.workbench {
    display: flex;
    flex: 1;
    flex-direction: column;
    gap: 4px;
    min-height: 0;
    padding: 0 3px 0 5px;
}
.row {
    display: grid;
    gap: 3px;
}
.row-top {
    grid-template-columns: 560fr 687fr;
}
.row-middle {
    grid-template-columns: 600fr 647fr;
}
.panel {
    display: flex;
    flex-direction: column;
    min-width: 0;
    border: 1px solid #808080;
    border-radius: 4px 4px 0 0;
}
.tabs {
    display: flex;
    height: 22px;
    border-bottom: 1px solid #808080;
}
.tabs .tools {
    margin-left: auto;
    padding-right: 2px;
}
.tab {
    display: flex;
    align-items: center;
    gap: 2px;
    height: 21px;
    padding: 0 2px 0 4px;
    border-right: 1px solid #808080;
    white-space: nowrap;
}
.tab .x {
    width: 10px;
    height: 10px;
    margin: 0 4px 0 5px;
}
.tab.selected {
    height: 22px;
    background: linear-gradient(#fff, #d4d0c8);
    border-radius: 0 4px 0 0;
}
.tab + .tab.selected {
    border-radius: 4px 4px 0 0;
}
.tab.selected.plain {
    background: #fff;
}
.tab.selected.focus {
    background: linear-gradient(#dfe1ea, #a0a9c6);
}
.tab.file {
    width: 91px;
}
.tab.file.main-c {
    width: 82px;
}
.viewbtn {
    display: flex;
    align-items: center;
    justify-content: center;
    width: 18px;
    height: 16px;
    margin-bottom: 5px;
}
.viewbtn svg {
    width: 10px;
    height: 10px;
}
.panel-body {
    flex: 1;
    margin: 2px 1px 1px 2px;
    background: #fff;
}

/* debug tree */
.tree {
    list-style: none;
    padding: 1px 0 0 2px;
}
.tree li {
    display: flex;
    align-items: center;
    height: 17px;
    white-space: nowrap;
}
.guide {
    position: relative;
    width: 19px;
    height: 17px;
}
.line {
    background: repeating-linear-gradient(#808080 0 1px, transparent 1px 2px) 9px 0 / 1px 100% no-repeat;
}
.arm, .elbow, .line.box {
    background: repeating-linear-gradient(#808080 0 1px, transparent 1px 2px) 9px 0 / 1px 100% no-repeat,
        repeating-linear-gradient(90deg, #808080 0 1px, transparent 1px 2px) 9px 8px / 10px 1px no-repeat;
}
.elbow {
    background-size: 1px 8px, 10px 1px;
}
.first {
    background: repeating-linear-gradient(90deg, #808080 0 1px, transparent 1px 2px) 9px 8px / 10px 1px no-repeat;
}
.box::before {
    content: "";
    position: absolute;
    left: 5px;
    top: 4px;
    width: 9px;
    height: 9px;
    border: 1px solid #808080;
    background: linear-gradient(#000, #000) center / 5px 1px no-repeat, #fff;
}
.tree .label {
    margin-left: 3px;
    padding: 2px;
}
.tree .label.current {
    background: #d4d0c8;
}

/* expressions */
.expressions {
    display: flex;
    flex-direction: column;
}
.table-wrap {
    flex: 1 1 0;
    min-height: 0;
    overflow: hidden;
}
table {
    width: 100%;
    table-layout: fixed;
    border-collapse: separate;
    border-spacing: 0;
}
.c-expr {
    width: 119px;
}
.c-type {
    width: 147px;
}
.c-value {
    width: 261px;
}
th, td {
    height: 17px;
    padding: 0 4px;
    overflow: hidden;
    font-weight: normal;
    text-align: left;
    white-space: nowrap;
}
th {
    height: 18px;
    padding: 0 5px;
    background: #d4d0c8;
    border-right: 1px solid #404040;
    border-bottom: 1px solid #404040;
    box-shadow: inset 1px 1px #fff, inset -1px -1px #808080;
}
td {
    border-right: 1px solid #d4d0c8;
    border-bottom: 1px solid #d4d0c8;
}
th:last-child, td:last-child {
    border-right: 0;
}
td:first-child {
    padding: 0 0 0 22px;
}
.expr {
    display: flex;
    align-items: center;
    gap: 4px;
    height: 16px;
}
.expr.add {
    font-style: italic;
}

/* scroll bars */
.scroll {
    display: flex;
}
.vertical {
    flex-direction: column;
    width: 16px;
}
.horizontal {
    height: 16px;
}
.raised {
    display: flex;
    flex: none;
    align-items: center;
    justify-content: center;
    width: 16px;
    height: 16px;
    background: #d4d0c8;
    border: 1px solid;
    border-color: #fff #404040 #404040 #fff;
    box-shadow: inset -1px -1px #808080;
}
.horizontal .thumb {
    width: 82%;
}
.vertical .thumb {
    height: 8px;
}
.track {
    flex: 1;
}
.track.above {
    flex-grow: 1.1;
}
.arrow {
    border: 4px solid transparent;
}
.arrow.up {
    border-bottom-color: #000;
    border-top: 0;
}
.arrow.down {
    border-top-color: #000;
    border-bottom: 0;
}
.arrow.left {
    border-right-color: #000;
    border-left: 0;
}
.arrow.right {
    border-left-color: #000;
    border-right: 0;
}

/* source editor and memory browser */
.row-middle .panel {
    min-height: 143px;
}
.row-middle .tabs, .graph .tabs {
    height: 23px;
}
.row-middle .tab, .graph .tab {
    height: 22px;
}
.row-middle .tab.selected, .graph .tab.selected {
    height: 23px;
}
.source {
    margin: 0;
    padding: 8px 7px;
}
.source .error {
    padding: 0 2px;
    margin-bottom: 9px;
}
.push {
    height: 23px;
    padding: 0 4px;
    background: #d4d0c8;
    border: 1px solid;
    border-color: #fff #404040 #404040 #fff;
    box-shadow: inset -1px -1px #808080;
}
.push:disabled {
    color: #808080;
    text-shadow: 1px 1px #fff;
}
.memory {
    display: flex;
    flex: 1;
    flex-direction: column;
    padding: 2px;
}
.address-bar {
    display: flex;
    align-items: center;
    gap: 5px;
    padding: 0 20px 0 5px;
}
.address-bar label {
    width: 4px;
    margin-right: -2px;
}
.combo {
    display: flex;
    flex: 1;
    height: 21px;
    margin-right: 1px;
    border: 1px solid;
    border-color: #404040 #fff #fff #404040;
    box-shadow: inset 1px 1px #808080;
    background: #fff;
    padding: 1px;
}
.combo input {
    flex: 1;
    min-width: 0;
    padding: 0 3px;
    outline: 0;
}
.combo .raised {
    height: 17px;
}
.memory-view {
    flex: 1;
    border: 1px solid #808080;
    border-radius: 4px 4px 0 0;
}
.memory-tabs {
    height: 17px;
    border-bottom: 1px solid #808080;
}

/* graph */
.graph {
    flex: 1;
    min-height: 0;
}
.graph-body {
    display: flex;
    flex: 1;
    min-height: 0;
    padding-top: 2px;
    border: 2px solid #a0a9c6;
    background: #fff;
}
.plot {
    flex: 1;
    min-width: 0;
    overflow: hidden;
}
#chart {
    width: 100%;
    height: 100%;
}
.axis {
    fill: none;
    stroke: #000;
    shape-rendering: crispEdges;
}
.signal {
    fill: none;
    stroke: #00f;
    shape-rendering: crispEdges;
}
.centered {
    text-anchor: middle;
}
.axis-title {
    font-weight: bold;
    font-style: italic;
    text-anchor: middle;
}

/* status bar */
.statusbar {
    display: flex;
    align-items: center;
    height: 33px;
    padding-bottom: 7px;
}
.statusbar > .bar:first-child {
    margin-left: 5px;
}
.status-icons {
    display: flex;
    gap: 12px;
    width: 57px;
    padding-left: 1px;
}
.licensed {
    width: 69px;
}
.progress {
    display: flex;
    align-items: center;
    width: 256px;
    margin-left: auto;
}
```
FILE: script.js
```javascript
// samples as [value, run length]; a bare number is a run of two
const runs = [
    [-1, 1], [0, 34], 1, [0, 4], 1, -3, 5, -26, 2, -3, 2, -1, [0, 18], -1, 3, -12, 0, -1, 1, -1, [0, 18],
    1, -1, 6, [0, 18], -1, 1, [0, 4], 2, -4, 19, 3, 1, -1, 1, -1, 0, -1, [0, 4], -1, 1, -1, 0, 2, -5,
    23, 8, 0, -2, 2, -1, 0, -1, [0, 4], -1, 1, -1, [1, 4], -4, 19, 10, [-1, 4], 1, -1, 1, -1, [0, 4],
    -1, 0, -1, 1, 0, -2, 10, 8, -1, 0, 1, -1, 0, -1, [0, 36],
    1, 0, 1, -1, [1, 4], -6, -12, 3, -1, 0, 1, 0, 1, [0, 4], 1, 0, 1, -2, 1, 0, -7, -22, 5, -2, 0,
    1, -1, 1, [0, 4], 1, 0, 1, -2, 2, -1, -5, -26, 6, -2, 0, 1, -1, 1, [0, 4], 1, 0, 1, -1, 2,
    [-1, 4], -20, 5, -2, 1, [0, 4], 1, [0, 14], -1, 0, -6, 1, -1, [0, 20], -1, 1, -1, 12, -2, 1, -1,
    [0, 16], 1, -2, 3, -4, 27, -5, 3, -2, 1, 0, -1, [0, 1]
];
const samples = runs.flatMap(r => Array.isArray(r) ? Array(r[1]).fill(r[0]) : [r, r]);

const chart = document.getElementById('chart');

function draw() {
    const width = chart.clientWidth;
    const height = chart.clientHeight;
    const left = 51;
    const bottom = height - 36;
    const xStep = (width - left) / (samples.length - 1);
    const yStep = (bottom - 2) / 66;
    const px = i => Math.round(left + i * xStep);
    const py = v => Math.round(bottom - 2 - (v + 30) * yStep);

    let ticks = `M${left - 1}.5 0V${bottom}M${left} ${bottom}.5H${width}`;
    let labels = '';

    for (let v = 34; v >= -30; v -= 2) {
        const major = (v - 34) % 4 === 0;
        ticks += `M${left - (major ? 7 : 4)} ${py(v)}.5h${major ? 6 : 3}`;
        if (major) {
            labels += `<text x="17" y="${Math.min(py(v) + 4, bottom - 2)}">${v}</text>`;
        }
    }
    for (let i = 0; i < samples.length; i += 5) {
        const major = i % 25 === 0;
        ticks += `M${px(i)}.5 ${bottom}v${major ? 7 : 4}`;
        if (major) {
            labels += `<text class="centered" x="${px(i)}" y="${bottom + 21}">${i ? '+' + i : 15360}</text>`;
        }
    }
    labels += `<text class="axis-title" x="${Math.round((left + width) / 2)}" y="${bottom + 33}">sample</text>`;

    const line = samples.map((v, i) => `${px(i)}.5,${py(v)}.5`).join(' ');
    chart.innerHTML = `<path class="axis" d="${ticks}"/><polyline class="signal" points="${line}"/>${labels}`;
}

window.addEventListener('resize', draw);
draw();
```
